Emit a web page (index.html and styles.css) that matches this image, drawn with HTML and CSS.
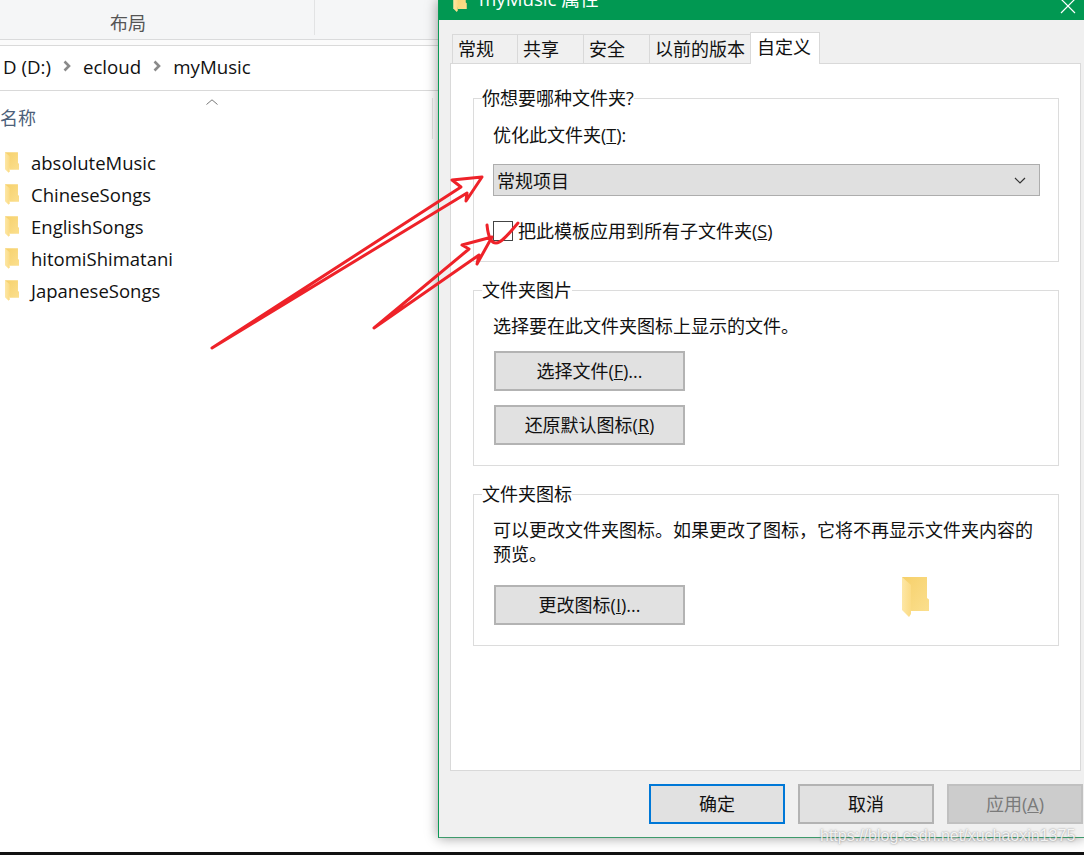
FILE: index.html
```html
<!DOCTYPE html>
<html lang="zh-CN">
<head>
<meta charset="utf-8">
<title>myMusic 属性</title>
<link rel="stylesheet" href="styles.css">
</head>
<body>
<svg class="defs" width="0" height="0" aria-hidden="true">
  <defs>
    <linearGradient id="folder-back" x1="0" y1="0" x2="1" y2="1">
      <stop offset="0" stop-color="#f6d06a"/>
      <stop offset="1" stop-color="#fbdf8e"/>
    </linearGradient>
    <linearGradient id="folder-front" x1="0" y1="0" x2="1" y2="0">
      <stop offset="0" stop-color="#fde7a6"/>
      <stop offset="1" stop-color="#fbdb84"/>
    </linearGradient>
    <symbol id="folder" viewBox="0 0 27 40">
      <path d="M0 0H25V21L27 22.500V34H9Z" fill="url(#folder-back)"/>
      <path d="M0 0L9 8V37L7 40L0 33Z" fill="url(#folder-front)"/>
    </symbol>
  </defs>
</svg>

<div class="screen">
  <section class="explorer">
    <div class="ribbon">
      <div class="ribbon-group">布局</div>
    </div>
    <div class="ribbon-gap"></div>
    <nav class="crumbs">
      <span>D (D:)</span>
      <svg class="crumb-sep" viewBox="0 0 8 12"><path d="M1.500 1.500L6 6L1.500 10.500" fill="none" stroke="#8a8a8a" stroke-width="2.600"/></svg>
      <span>ecloud</span>
      <svg class="crumb-sep" viewBox="0 0 8 12"><path d="M1.500 1.500L6 6L1.500 10.500" fill="none" stroke="#8a8a8a" stroke-width="2.600"/></svg>
      <span>myMusic</span>
    </nav>
    <div class="columns">
      <div class="column-name">
        名称
        <svg class="sort-mark" viewBox="0 0 12 6"><path d="M.5 5.500L6 .8L11.500 5.500" fill="none" stroke="#777" stroke-width="1"/></svg>
      </div>
    </div>
    <ul class="files">
      <li class="file"><svg class="file-icon"><use href="#folder"/></svg>absoluteMusic</li>
      <li class="file"><svg class="file-icon"><use href="#folder"/></svg>ChineseSongs</li>
      <li class="file"><svg class="file-icon"><use href="#folder"/></svg>EnglishSongs</li>
      <li class="file"><svg class="file-icon"><use href="#folder"/></svg>hitomiShimatani</li>
      <li class="file"><svg class="file-icon"><use href="#folder"/></svg>JapaneseSongs</li>
    </ul>
  </section>

  <section class="dialog">
    <header class="titlebar">
      <svg class="title-icon"><use href="#folder"/></svg>
      <span class="title-text">myMusic 属性</span>
      <svg class="title-close" viewBox="0 0 16 16"><path d="M1 1L15 15M15 1L1 15" fill="none" stroke="#fff" stroke-width="1.200"/></svg>
    </header>

    <div class="tabs">
      <div class="tab tab-w65">常规</div>
      <div class="tab tab-w66">共享</div>
      <div class="tab tab-w66">安全</div>
      <div class="tab tab-w101">以前的版本</div>
      <div class="tab tab-active">自定义</div>
    </div>

    <div class="panel">
      <fieldset class="group group-type">
        <legend>你想要哪种文件夹?</legend>
        <div class="field-label">优化此文件夹(<u>T</u>):</div>
        <div class="select">
          <span>常规项目</span>
          <svg class="select-arrow" viewBox="0 0 12 7"><path d="M1 1L6 6L11 1" fill="none" stroke="#333" stroke-width="1.200"/></svg>
        </div>
        <label class="check-row"><span class="checkbox"></span><span class="check-text">把此模板应用到所有子文件夹(<u>S</u>)</span></label>
      </fieldset>

      <fieldset class="group group-picture">
        <legend>文件夹图片</legend>
        <p class="group-text">选择要在此文件夹图标上显示的文件。</p>
        <div class="button wide"><span>选择文件(<u>F</u>)...</span></div>
        <div class="button wide"><span>还原默认图标(<u>R</u>)</span></div>
      </fieldset>

      <fieldset class="group group-icon">
        <legend>文件夹图标</legend>
        <p class="group-text">可以更改文件夹图标。如果更改了图标，它将不再显示文件夹内容的预览。</p>
        <div class="icon-row">
          <div class="button wide"><span>更改图标(<u>I</u>)...</span></div>
          <svg class="big-folder"><use href="#folder"/></svg>
        </div>
      </fieldset>
    </div>

    <footer class="actions">
      <div class="button action default">确定</div>
      <div class="button action">取消</div>
      <div class="button action disabled"><span>应用(<u>A</u>)</span></div>
    </footer>
  </section>

  <!-- hand-drawn annotations on top of both windows -->
  <svg class="marks" viewBox="0 0 1084 852">
    <path d="M212 348L461 187L452 180L482 177L466 201L467 193Z"/>
    <path d="M374 328L469 249L462 245L492 237L477 264L479 255Z"/>
    <path d="M487 225C488 235 491 243 496 243C502 243 510 232 518 223"/>
  </svg>

  <div class="watermark">https://blog.csdn.net/xuchaoxin1375</div>
</div>
<div class="taskbar"></div>
</body>
</html>
```

FILE: styles.css
```css
* {
  box-sizing: border-box;
}

html,
body {
  margin: 0;
  height: 100%;
  overflow: hidden;
  background: #fff;
}

body {
  font-family: "Open Sans", "Noto Sans CJK SC", sans-serif;
  font-size: 18px;
  color: #111;
}

.defs {
  position: absolute;
}

.screen {
  position: relative;
  display: flex;
  height: 852px;
  overflow: hidden;
}

.taskbar {
  height: 3px;
  background: #111;
}

/* File explorer behind the dialog */
.explorer {
  width: 438px;
  flex: none;
}

.ribbon {
  height: 40px;
  background: #f5f6f7;
  border-bottom: 1px solid #dadbdc;
}

.ribbon-group {
  width: 315px;
  height: 35px;
  padding: 10px 0 0 110px;
  line-height: 26px;
  color: #555;
  border-right: 1px solid #e2e3e4;
}

.ribbon-gap {
  height: 6px;
  background: #fbfbfb;
  border-bottom: 1px solid #dadada;
}

.crumbs {
  display: flex;
  align-items: center;
  gap: 12px;
  height: 45px;
  padding: 0 0 4px 3px;
  font-size: 18.700px;
  border-bottom: 1px solid #d9d9d9;
}

.crumb-sep {
  width: 8px;
  height: 12px;
  flex: none;
}

.columns {
  height: 55px;
  padding-top: 7px;
}

.column-name {
  position: relative;
  width: 433px;
  height: 41px;
  line-height: 41px;
  color: #4c607a;
  border-right: 1px solid #e5e5e5;
}

.sort-mark {
  position: absolute;
  left: 206px;
  top: 1px;
  width: 12px;
  height: 6px;
}

.files {
  list-style: none;
  margin: 0;
  padding: 0;
}

.file {
  display: flex;
  align-items: center;
  height: 32px;
  padding-left: 5px;
  font-size: 18.500px;
  color: #111;
}

.file-icon {
  width: 14px;
  height: 21px;
  margin-right: 12px;
  flex: none;
}

/* Properties dialog */
.dialog {
  display: flex;
  flex-direction: column;
  width: 646px;
  height: 838px;
  flex: none;
  background: #f0f0f0;
  border-left: 1px solid #0a9a55;
  border-bottom: 1px solid #3d9a6b;
  box-shadow: 0 0 12px rgba(0, 0, 0, .4);
  z-index: 1;
}

.titlebar {
  display: flex;
  align-items: flex-end;
  height: 20px;
  flex: none;
  padding: 0 8px 9px 14px;
  gap: 12px;
  background: #019852;
  color: #fff;
  font-size: 18.700px;
  overflow: hidden;
}

.title-icon {
  width: 14px;
  height: 20px;
  flex: none;
  margin-bottom: -1px;
}

.title-text {
  line-height: 24px;
  flex: 1;
}

.title-close {
  width: 16px;
  height: 16px;
  flex: none;
  margin-bottom: -3px;
}

.tabs {
  display: flex;
  align-items: flex-end;
  height: 43px;
  flex: none;
  padding-left: 13px;
  position: relative;
  z-index: 1;
}

.tab {
  height: 29px;
  padding-left: 5px;
  line-height: 29px;
  background: #f0f0f0;
  border: 1px solid #d9d9d9;
  border-bottom: 0;
  border-right: 0;
}

.tab-w65 {
  width: 65px;
}

.tab-w66 {
  width: 66px;
}

.tab-w101 {
  width: 101px;
}

.tab-active {
  width: 70px;
  height: 32px;
  padding-left: 6px;
  line-height: 28px;
  margin-bottom: -1px;
  background: #fff;
  border: 1px solid #d9d9d9;
  border-bottom: 0;
}

.panel {
  display: flex;
  flex-direction: column;
  gap: 16px;
  height: 708px;
  margin: 0 3px 0 11px;
  padding: 22px 20px 0 22px;
  background: #fff;
  border: 1px solid #d9d9d9;
  flex: none;
}

.group {
  width: 586px;
  margin: 0;
  padding: 0 19px 0 19px;
  border: 1px solid #dcdcdc;
  min-width: 0;
}

.group legend {
  margin-left: -11px;
  padding: 0;
  line-height: 24px;
  height: 24px;
}

.group-type {
  height: 176px;
}

.group-picture {
  height: 188px;
}

.group-icon {
  height: 164px;
}

.field-label {
  margin-top: 12px;
  line-height: 26px;
}

.select {
  display: flex;
  align-items: center;
  justify-content: space-between;
  width: 547px;
  height: 32px;
  margin-top: 16px;
  padding: 0 13px 0 3px;
  background: #e0e0e0;
  border: 1px solid #adadad;
}

.select-arrow {
  width: 12px;
  height: 7px;
}

.check-row {
  display: flex;
  align-items: center;
  gap: 5px;
  margin-top: 22px;
  line-height: 24px;
}

.check-text {
  padding-top: 1px;
}

.checkbox {
  width: 20px;
  height: 20px;
  border: 1px solid #444;
  background: #fff;
  flex: none;
}

.group-text {
  margin: 0;
  padding-top: 12px;
  line-height: 24px;
}

.button {
  display: flex;
  align-items: center;
  justify-content: center;
  height: 40px;
  padding-bottom: 3px;
  background: #e1e1e1;
  border: 2px solid #b3b3b3;
}

.wide {
  width: 191px;
  margin-left: 1px;
}

.group-picture .button {
  margin-top: 14px;
}

.group-picture .group-text + .button {
  margin-top: 13px;
}

.icon-row {
  display: flex;
  margin-top: 19px;
}

.big-folder {
  width: 27px;
  height: 40px;
  margin: -8px 0 0 217px;
  flex: none;
}

.actions {
  display: flex;
  justify-content: flex-end;
  gap: 13px;
  padding: 13px 1px 0 0;
}

.action {
  width: 136px;
}

.default {
  border-color: #0078d7;
}

.disabled {
  background: #cccccc;
  border-color: #c0c0c0;
  color: #7a7a7a;
}

/* Annotations and overlays */
.marks {
  position: absolute;
  left: 0;
  top: 0;
  width: 1084px;
  height: 852px;
  z-index: 2;
  fill: none;
  stroke: #ee2229;
  stroke-width: 3;
  stroke-linejoin: round;
  stroke-linecap: round;
}

.watermark {
  position: absolute;
  left: 820px;
  top: 826px;
  z-index: 3;
  font-family: "Liberation Sans", sans-serif;
  font-size: 16px;
  line-height: 20px;
  color: rgba(255, 255, 255, .85);
  text-shadow: 0 0 2px rgba(90, 90, 90, .7);
}
```
